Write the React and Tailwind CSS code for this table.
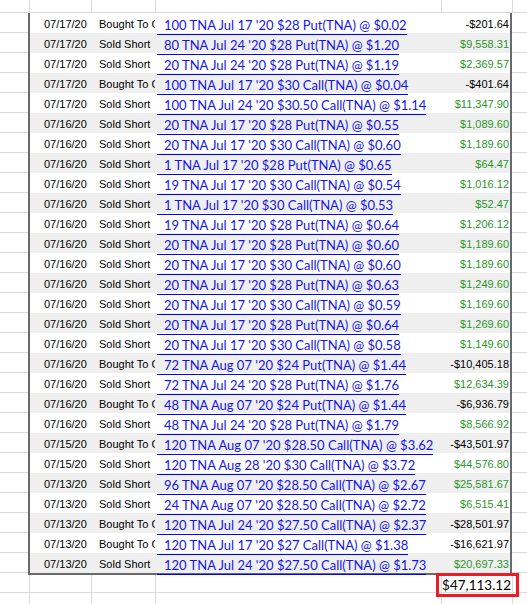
import React from 'react';

// Pasted trade log sitting on top of an Excel sheet.
const TRADES = [
    ['07/17/20', 'Bought To Cover', '100 TNA Jul 17 \'20 $28 Put(TNA) @ $0.02', '-$201.64'],
    ['07/17/20', 'Sold Short', '80 TNA Jul 24 \'20 $28 Put(TNA) @ $1.20', '$9,558.31'],
    ['07/17/20', 'Sold Short', '20 TNA Jul 24 \'20 $28 Put(TNA) @ $1.19', '$2,369.57'],
    ['07/17/20', 'Bought To Cover', '100 TNA Jul 17 \'20 $30 Call(TNA) @ $0.04', '-$401.64'],
    ['07/17/20', 'Sold Short', '100 TNA Jul 24 \'20 $30.50 Call(TNA) @ $1.14', '$11,347.90'],
    ['07/16/20', 'Sold Short', '20 TNA Jul 17 \'20 $28 Put(TNA) @ $0.55', '$1,089.60'],
    ['07/16/20', 'Sold Short', '20 TNA Jul 17 \'20 $30 Call(TNA) @ $0.60', '$1,189.60'],
    ['07/16/20', 'Sold Short', '1 TNA Jul 17 \'20 $28 Put(TNA) @ $0.65', '$64.47'],
    ['07/16/20', 'Sold Short', '19 TNA Jul 17 \'20 $30 Call(TNA) @ $0.54', '$1,016.12'],
    ['07/16/20', 'Sold Short', '1 TNA Jul 17 \'20 $30 Call(TNA) @ $0.53', '$52.47'],
    ['07/16/20', 'Sold Short', '19 TNA Jul 17 \'20 $28 Put(TNA) @ $0.64', '$1,206.12'],
    ['07/16/20', 'Sold Short', '20 TNA Jul 17 \'20 $28 Put(TNA) @ $0.60', '$1,189.60'],
    ['07/16/20', 'Sold Short', '20 TNA Jul 17 \'20 $30 Call(TNA) @ $0.60', '$1,189.60'],
    ['07/16/20', 'Sold Short', '20 TNA Jul 17 \'20 $28 Put(TNA) @ $0.63', '$1,249.60'],
    ['07/16/20', 'Sold Short', '20 TNA Jul 17 \'20 $30 Call(TNA) @ $0.59', '$1,169.60'],
    ['07/16/20', 'Sold Short', '20 TNA Jul 17 \'20 $28 Put(TNA) @ $0.64', '$1,269.60'],
    ['07/16/20', 'Sold Short', '20 TNA Jul 17 \'20 $30 Call(TNA) @ $0.58', '$1,149.60'],
    ['07/16/20', 'Bought To Cover', '72 TNA Aug 07 \'20 $24 Put(TNA) @ $1.44', '-$10,405.18'],
    ['07/16/20', 'Sold Short', '72 TNA Jul 24 \'20 $28 Put(TNA) @ $1.76', '$12,634.39'],
    ['07/16/20', 'Bought To Cover', '48 TNA Aug 07 \'20 $24 Put(TNA) @ $1.44', '-$6,936.79'],
    ['07/16/20', 'Sold Short', '48 TNA Jul 24 \'20 $28 Put(TNA) @ $1.79', '$8,566.92'],
    ['07/15/20', 'Bought To Cover', '120 TNA Aug 07 \'20 $28.50 Call(TNA) @ $3.62', '-$43,501.97'],
    ['07/15/20', 'Sold Short', '120 TNA Aug 28 \'20 $30 Call(TNA) @ $3.72', '$44,576.80'],
    ['07/13/20', 'Sold Short', '96 TNA Aug 07 \'20 $28.50 Call(TNA) @ $2.67', '$25,581.67'],
    ['07/13/20', 'Sold Short', '24 TNA Aug 07 \'20 $28.50 Call(TNA) @ $2.72', '$6,515.41'],
    ['07/13/20', 'Bought To Cover', '120 TNA Jul 24 \'20 $27.50 Call(TNA) @ $2.37', '-$28,501.97'],
    ['07/13/20', 'Bought To Cover', '120 TNA Jul 17 \'20 $27 Call(TNA) @ $1.38', '-$16,621.97'],
    ['07/13/20', 'Sold Short', '120 TNA Jul 24 \'20 $27.50 Call(TNA) @ $1.73', '$20,697.33'],
];

const CALIBRI = 'font-["Lato","Liberation_Sans",sans-serif]';

// Plain sheet row: empty cells with the light gridlines.
const SheetRow = ({ height, children }) => (
    <div className={`flex ${height} border-b border-[#dadada]`}>
        <div className="w-[30px] border-r border-[#dadada]" />
        <div className="w-[62px] border-r border-[#dadada]" />
        <div className="w-[64px] border-r border-[#dadada]" />
        <div className="w-[286px] border-r border-[#dadada]" />
        <div className="w-[71px] border-r border-[#dadada]">{children}</div>
        <div className="flex-1" />
    </div>
);

const TradeRow = ({ trade, index }) => {
    const [date, type, desc, amount] = trade;
    const negative = amount.startsWith('-');
    return (
        <div className={`flex h-[20px] ${index % 2 === 1 ? 'bg-[#efefef]' : 'bg-white'}`}>
            <div className="w-[69px] pl-[14px] pt-[1px] text-[11px] leading-[20px] text-black">{date}</div>
            <div className="w-[56px] overflow-hidden whitespace-nowrap pt-[1px] text-[11px] leading-[20px] text-black">
                {type}
            </div>
            <div className="w-[286px] whitespace-nowrap">
                <span
                    className={`ml-[2px] inline-block h-[19px] border-b border-[#0000ff] pl-[7px] text-[13px] leading-[19px] text-[#1414f5] ${CALIBRI}`}
                >
                    {desc}
                </span>
            </div>
            <div
                className={`flex-1 pr-[1px] pt-[1px] text-right text-[11px] leading-[20px] ${
                    negative ? 'text-black' : 'text-[#2b962b]'
                }`}
            >
                {amount}
            </div>
        </div>
    );
};

const App = () => {
    return (
        <div className='w-[527px] h-[604px] overflow-hidden bg-white font-["Liberation_Sans",Arial,sans-serif]'>
            <SheetRow height="h-[13px]" />

            {/* pasted table with its dark frame */}
            <div className="flex">
                <div className="w-[28px] flex flex-col">
                    {TRADES.map((_, i) => (
                        <div key={i} className="h-[20px] border-b border-[#dadada]" />
                    ))}
                </div>
                <div className="w-[484px] border-l-2 border-r-2 border-b-2 border-[#6a6a6a]">
                    {TRADES.map((t, i) => (
                        <TradeRow key={i} trade={t} index={i} />
                    ))}
                </div>
                <div className="flex-1 flex flex-col">
                    {TRADES.map((_, i) => (
                        <div key={i} className="h-[20px] border-b border-[#dadada]" />
                    ))}
                </div>
            </div>

            {/* total row with the red annotation box */}
            <div className="relative">
                <SheetRow height="h-[18px]">
                    <div className={`pr-[1px] pt-[1px] text-right text-[13.5px] leading-[18px] text-black ${CALIBRI}`}>
                        $47,113.12
                    </div>
                </SheetRow>
                <div className="absolute left-[436px] top-[-2px] w-[83px] h-[24px] border-[3px] border-[#ed1c24]" />
            </div>
            <SheetRow height="h-[20px]" />
        </div>
    );
};

export default App;
